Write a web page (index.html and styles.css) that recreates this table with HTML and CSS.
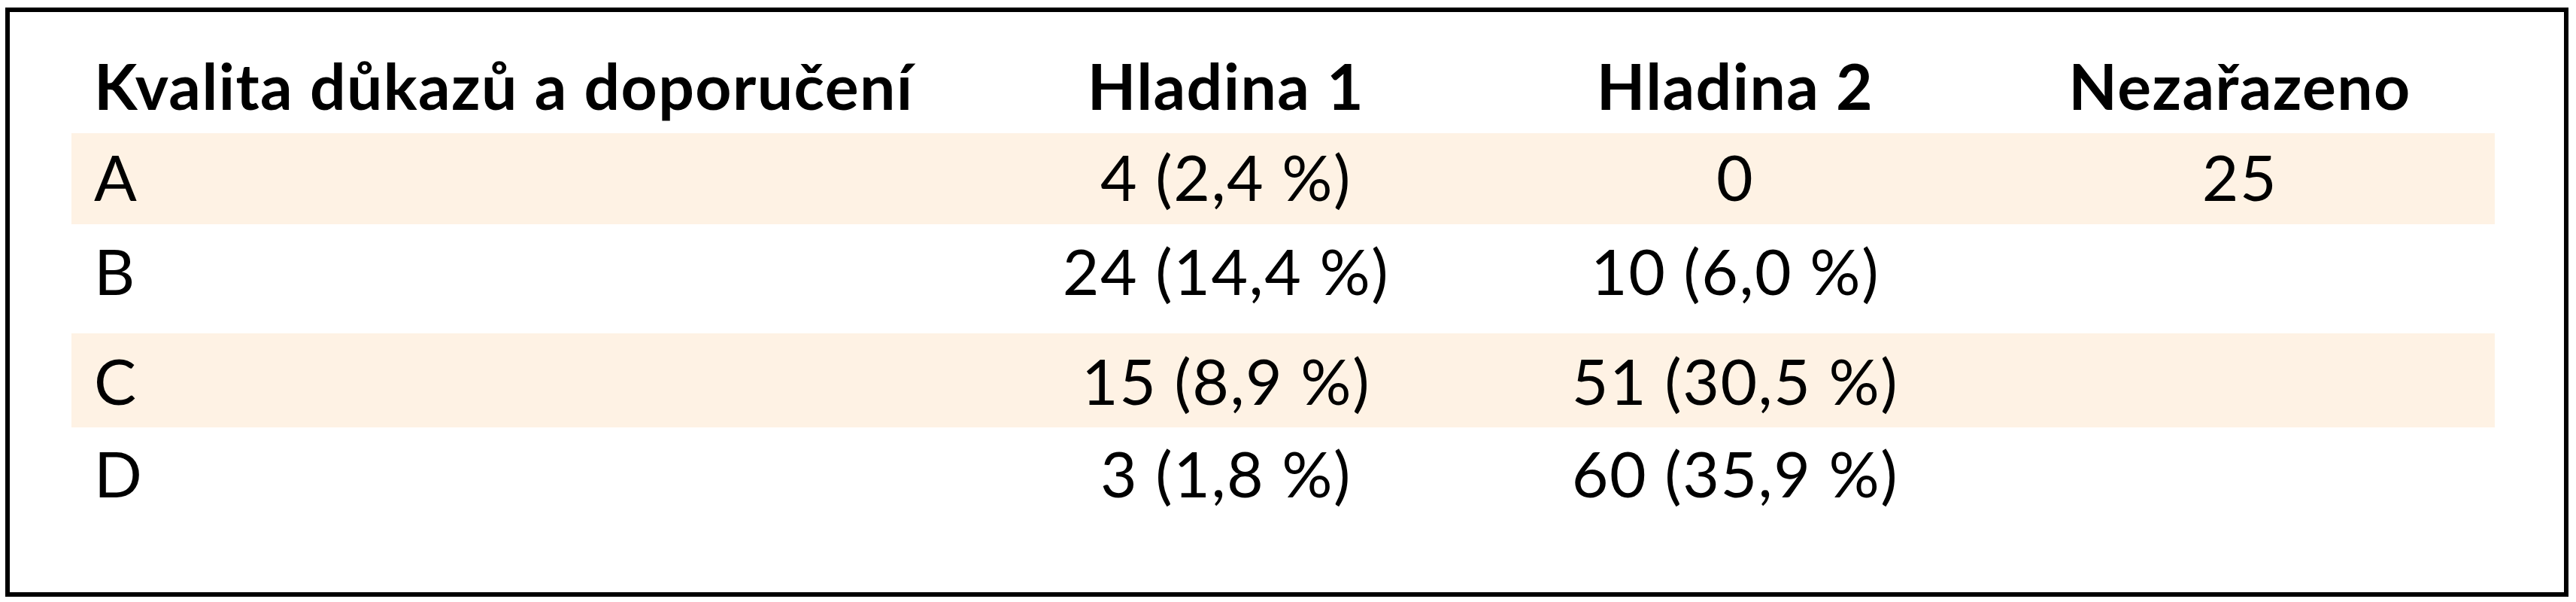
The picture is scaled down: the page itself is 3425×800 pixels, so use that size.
FILE: index.html
```html
<!DOCTYPE html>
<html lang="cs">
<head>
<meta charset="utf-8">
<title>Kvalita důkazů a doporučení</title>
<link rel="stylesheet" href="styles.css">
</head>
<body>
<div class="frame">
  <div class="row head">
    <div class="cell first">Kvalita důkazů a doporučení</div>
    <div class="cell">Hladina 1</div>
    <div class="cell">Hladina 2</div>
    <div class="cell">Nezařazeno</div>
  </div>
  <div class="row shade ra">
    <div class="cell first">A</div>
    <div class="cell">4 (2,4 %)</div>
    <div class="cell">0</div>
    <div class="cell">25</div>
  </div>
  <div class="row rb">
    <div class="cell first">B</div>
    <div class="cell">24 (14,4 %)</div>
    <div class="cell">10 (6,0 %)</div>
    <div class="cell"></div>
  </div>
  <div class="row shade rc">
    <div class="cell first">C</div>
    <div class="cell">15 (8,9 %)</div>
    <div class="cell">51 (30,5 %)</div>
    <div class="cell"></div>
  </div>
  <div class="row rd">
    <div class="cell first">D</div>
    <div class="cell">3 (1,8 %)</div>
    <div class="cell">60 (35,9 %)</div>
    <div class="cell"></div>
  </div>
</div>
</body>
</html>
```
FILE: styles.css
```css
html, body {
  margin: 0;
  padding: 0;
  background: #ffffff;
}
body {
  font-family: Lato, "Open Sans", "Liberation Sans", sans-serif;
  color: #000;
}
.frame {
  box-sizing: border-box;
  margin: 10px 0 0 7px;
  width: 3408px;
  height: 783px;
  border: 6px solid #000;
  padding: 0 92px 0 82px;
}
.row {
  display: grid;
  grid-template-columns: 1190px 690px 664px 678px;
  box-sizing: border-box;
  font-size: 84px;
  line-height: 1.2;
  font-weight: 400;
  letter-spacing: 1.5px;
}
.cell {
  text-align: center;
  white-space: nowrap;
}
.cell.first {
  text-align: left;
  padding-left: 30px;
}
.head {
  font-weight: 700;
  height: 161px;
  padding-top: 48px;
  letter-spacing: 1.4px;
}
.shade {
  background: #fef2e4;
}
.ra { height: 121px; padding-top: 8px; }
.rb { height: 145px; padding-top: 12px; }
.rc { height: 125px; padding-top: 13px; }
.rd { height: 120px; padding-top: 11px; }
```
